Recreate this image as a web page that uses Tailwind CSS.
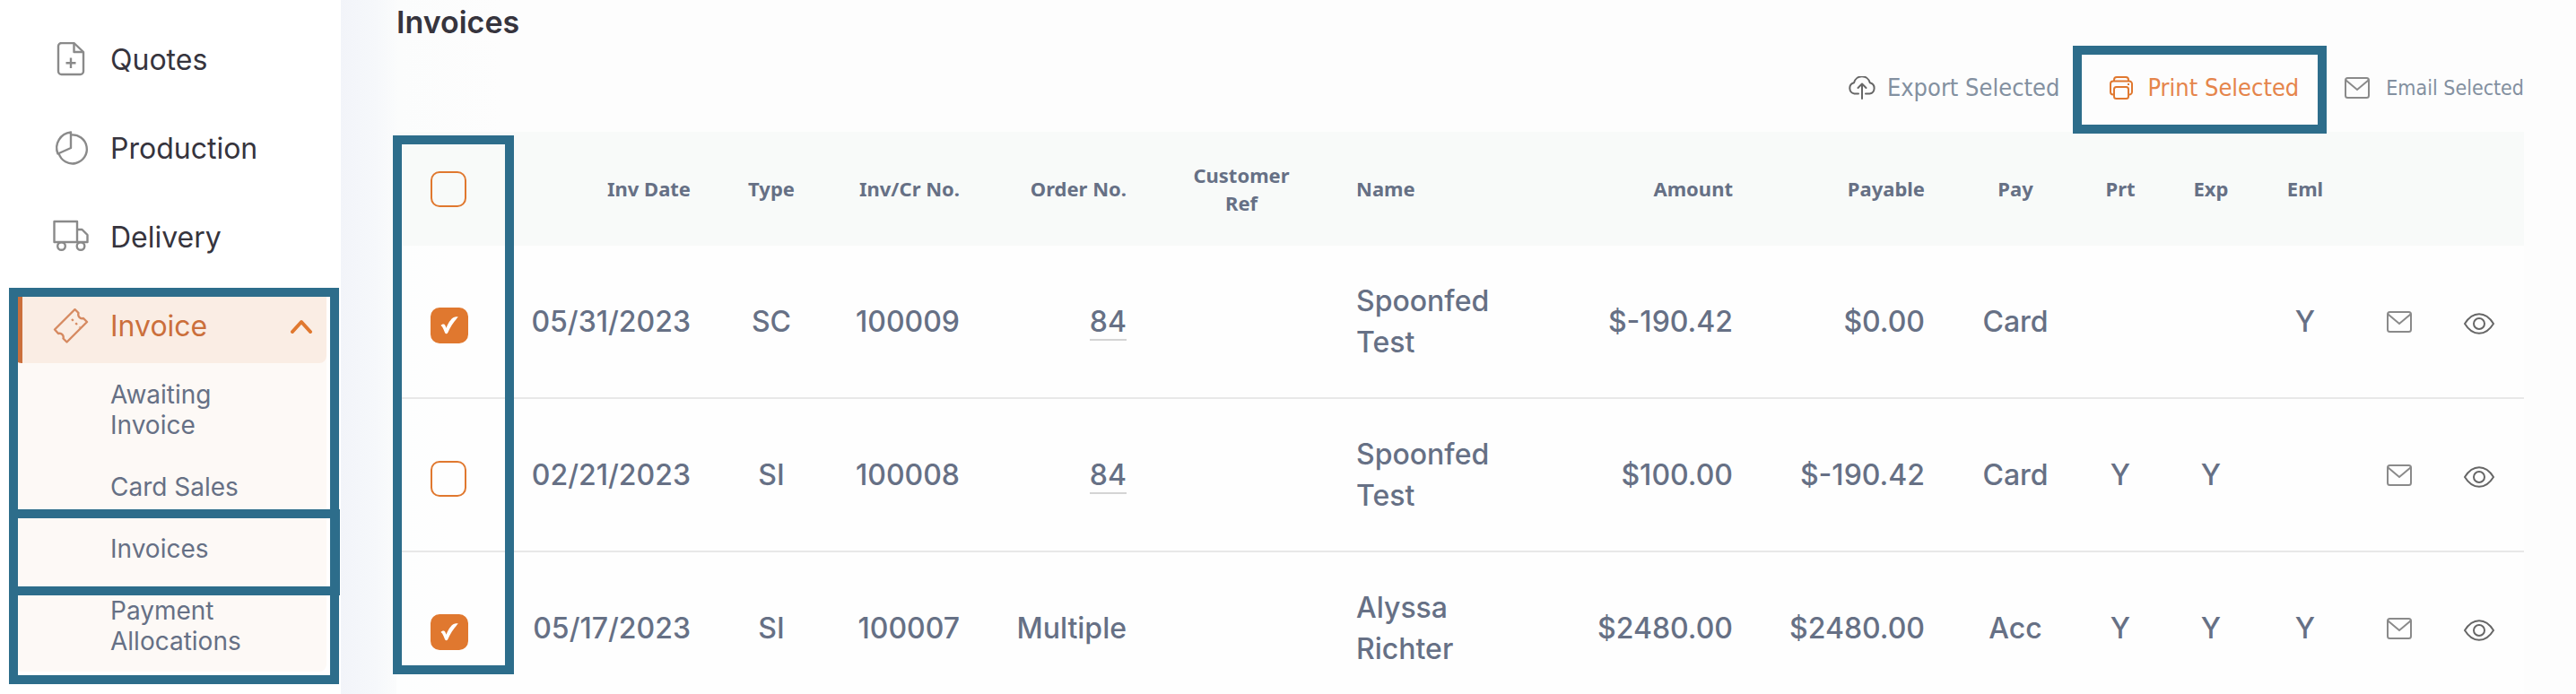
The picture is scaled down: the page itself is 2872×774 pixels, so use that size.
<!DOCTYPE html>
<html lang="en">
<head>
  <meta charset="UTF-8">
  <meta name="viewport" content="width=device-width, initial-scale=1.0">
  <title>Invoices</title>
  <script src="https://cdn.jsdelivr.net/npm/@tailwindcss/browser@4"></script>
</head>
<body class="bg-white font-['Inter',sans-serif] text-[#667085] h-screen overflow-hidden">
  <!-- Icon sprites -->
  <svg class="hidden" aria-hidden="true">
    <symbol id="icon-mail" viewBox="0 0 28 24">
      <rect x="1" y="1" width="26" height="22" rx="2.5" fill="none" stroke="currentColor" stroke-width="2" />
      <path d="M1.5 3.5 14 14 26.5 3.5" fill="none" stroke="currentColor" stroke-width="2" />
    </symbol>
    <symbol id="icon-eye" viewBox="0 0 34 24">
      <path d="M1 12C5 5.500 10.500 1.200 17 1.200S29 5.500 33 12C29 18.500 23.500 22.800 17 22.800S5 18.500 1 12Z" fill="none" stroke="currentColor" stroke-width="2" stroke-linejoin="round" />
      <circle cx="17" cy="12" r="6" fill="none" stroke="currentColor" stroke-width="2" />
    </symbol>
    <symbol id="icon-check" viewBox="0 0 20 20">
      <path d="M0.500 10C2 8 4.500 8 5.300 9.800L6.600 12.800C8.500 7.500 11.500 2.800 14.800 1 16.500.2 18.200.2 19.800.6 14.500 6 11 12 8.300 18 7.400 19.600 5.800 19.600 5 18 4 15.500 2.800 11.500.5 10Z" fill="currentColor" />
    </symbol>
  </svg>

  <div class="flex h-full">
    <!-- Sidebar -->
    <aside class="w-[380px] shrink-0 pl-4 pr-4 pt-[25px]">
      <nav class="flex flex-col gap-4 text-[32px] text-[#36343d]">
        <a href="#" class="flex h-[83px] items-center gap-6 pl-[43px]">
          <svg class="size-10 shrink-0 text-[#8a8a8a]" viewBox="0 0 40 40" fill="none" stroke="currentColor" stroke-width="2.400" stroke-linejoin="round">
            <path d="M23.500 1H9.500A3.500 3.500 0 0 0 6 4.500V32.500A3.500 3.500 0 0 0 9.500 36H30.500A3.500 3.500 0 0 0 34 32.500V11Z" />
            <path d="M23.500 1V11H34M20 17.500V29M14.500 23.200H25.500" />
          </svg>
          Quotes
        </a>
        <a href="#" class="flex h-[83px] items-center gap-6 pl-[43px]">
          <svg class="size-10 shrink-0 text-[#8a8a8a]" viewBox="0 0 40 40" fill="none" stroke="currentColor" stroke-width="2.400" stroke-linejoin="round">
            <path d="M20 1.500A17.500 17.500 0 0 0 5.500 25.500L20 19Z" />
            <path d="M20 4.500A16 16 0 1 1 6.500 25" />
          </svg>
          Production
        </a>
        <a href="#" class="flex h-[83px] items-center gap-6 pl-[43px]">
          <svg class="size-10 shrink-0 text-[#8a8a8a]" viewBox="0 0 40 40" fill="none" stroke="currentColor" stroke-width="2.400" stroke-linejoin="round">
            <path d="M1.500 2H27V25H1.500ZM27 11H32.500L38.500 17V25H27Z" />
            <circle cx="9.500" cy="29.500" r="4.300" />
            <circle cx="31" cy="29.500" r="4.300" />
          </svg>
          Delivery
        </a>

        <!-- Invoice group, open -->
        <div class="relative rounded-b-lg bg-[#fdf9f6]">
          <button type="button" class="flex h-[83px] w-full items-center gap-6 rounded-lg border-l-[9px] border-[#cb6f3b] bg-[#faede4] pl-[34px] pr-[14px] text-[#cb6f3b]">
            <svg class="size-10 shrink-0 text-[#d68a61]" viewBox="0 0 40 40" fill="none" stroke="currentColor" stroke-width="2.400" stroke-linejoin="round">
              <path d="M24.500 1 28.500 5C27.500 8.500 30 12 34 11L38 15 15.500 37.500 11.500 33.500C12.500 30 9.500 27 6 28L2 23.500Z" />
              <path d="M21 12 30 21" stroke-dasharray="2.500 3.500" />
            </svg>
            Invoice
            <svg class="ml-auto h-4 w-7 text-[#e0782f]" viewBox="0 0 28 16" fill="none" stroke="currentColor" stroke-width="4" stroke-linecap="round" stroke-linejoin="round">
              <path d="M4 14 14 3 24 14" />
            </svg>
          </button>
          <ul class="flex flex-col gap-[35px] pb-[17px] pl-[107px] pr-16 pt-[18px] text-[28px] leading-[34px] text-[#667085]">
            <li><a href="#" class="block">Awaiting Invoice</a></li>
            <li><a href="#" class="block">Card Sales</a></li>
            <li class="relative">
              <a href="#" class="block">Invoices</a>
              <span class="pointer-events-none absolute -left-[113px] -top-[27px] h-24 w-[369px] border-10 border-[#2d6d8b]"></span>
            </li>
            <li><a href="#" class="block">Payment Allocations</a></li>
          </ul>
          <span class="pointer-events-none absolute -left-1.5 -right-3.5 -top-px -bottom-3.5 border-10 border-[#2d6d8b]"></span>
        </div>
      </nav>
    </aside>

    <!-- Content -->
    <main class="min-w-0 flex-1 bg-[#fdfdfd] bg-[linear-gradient(to_right,#f2f4f9_0px,#f6f8fb_40px,#fbfcfc_65px,#fdfdfd_180px)] pl-[62px] pr-[58px]">
      <h1 class="text-[34px] font-semibold leading-[49px] text-[#36343d]">Invoices</h1>

      <div class="flex h-[98px] items-center justify-end font-['DejaVu_Sans_Condensed','DejaVu_Sans',sans-serif] text-[27px] text-[#8390a0]">
        <button type="button" class="mr-14 flex items-center gap-3">
          <svg class="h-[26px] w-8 text-[#666]" viewBox="0 0 32 26" fill="none" stroke="currentColor" stroke-width="2" stroke-linecap="round" stroke-linejoin="round">
            <path d="M12 19.500H7.500A6.300 6.300 0 0 1 7 7.200 9.200 9.200 0 0 1 24.800 7.200 6.300 6.300 0 0 1 24.500 19.500H20" />
            <path d="M16 25V9M11.500 13 16 8.500 20.500 13" />
          </svg>
          Export Selected
        </button>
        <button type="button" class="relative z-10 mr-[51px] flex items-center gap-4 text-[#e5854b]">
          <svg class="size-[26px] text-[#e0782f]" viewBox="0 0 26 26" fill="none" stroke="currentColor" stroke-width="2" stroke-linejoin="round">
            <path d="M5 5.500V4A3 3 0 0 1 8 1H18A3 3 0 0 1 21 4V5.500" />
            <path d="M5 20.500H4A3 3 0 0 1 1 17.500V8.500A3 3 0 0 1 4 5.500H22A3 3 0 0 1 25 8.500V17.500A3 3 0 0 1 22 20.500H21" />
            <rect x="5" y="12" width="16" height="13" rx="2.500" />
            <path d="M20 9H22" />
          </svg>
          Print Selected
          <span class="absolute -left-[41px] -right-[31px] top-1/2 mt-0.5 h-[98px] -translate-y-1/2 border-10 border-[#2d6d8b]"></span>
        </button>
        <button type="button" class="flex items-center gap-[18px] text-[23px]">
          <svg class="h-6 w-7 text-[#8a8a8a]"><use href="#icon-mail" /></svg>
          Email Selected
        </button>
      </div>

      <div class="relative">
        <table class="w-full table-fixed border-separate border-spacing-0 text-[32px] font-medium leading-[46px]">
          <colgroup>
            <col class="w-[131px]">
            <col class="w-[217px]">
            <col class="w-[140px]">
            <col class="w-[160px]">
            <col class="w-[186px]">
            <col class="w-[216px]">
            <col class="w-[230px]">
            <col class="w-[230px]">
            <col class="w-[214px]">
            <col class="w-[162px]">
            <col class="w-[72px]">
            <col class="w-[130px]">
            <col class="w-[80px]">
            <col class="w-[130px]">
            <col class="w-[74px]">
          </colgroup>
          <thead class="bg-[#f8faf9] font-['Noto_Sans',sans-serif] text-[22px] leading-[31px]">
            <tr class="h-[127px]">
              <th class="pl-[38px] text-left">
                <input type="checkbox" aria-label="Select all invoices" class="block size-10 appearance-none rounded-[10px] border-2 border-[#e0782f]">
              </th>
              <th class="pr-5 text-right">Inv Date</th>
              <th>Type</th>
              <th class="pr-5 text-right">Inv/Cr No.</th>
              <th class="pr-5 text-right">Order No.</th>
              <th class="px-12">Customer Ref</th>
              <th class="pl-5 text-left">Name</th>
              <th class="pr-5 text-right">Amount</th>
              <th class="pr-5 text-right">Payable</th>
              <th>Pay</th>
              <th>Prt</th>
              <th>Exp</th>
              <th>Eml</th>
              <td></td>
              <td></td>
            </tr>
          </thead>
          <tbody class="bg-white/60 text-center [&_td]:border-b-2 [&_td]:border-[#e8e8e8]">
            <tr class="h-[171px]">
              <td class="pl-[38px] pt-2">
                <label class="grid w-[42px] place-items-center">
                  <input type="checkbox" checked aria-label="Select invoice 100009" class="peer col-start-1 row-start-1 h-10 w-[42px] appearance-none rounded-[10px] border-2 border-[#e0782f] checked:bg-[#e0782f]">
                  <svg class="invisible col-start-1 row-start-1 size-5 text-white peer-checked:visible"><use href="#icon-check" /></svg>
                </label>
              </td>
              <td class="pr-5 text-right">05/31/2023</td>
              <td>SC</td>
              <td class="pr-5 text-right">100009</td>
              <td class="pr-5 text-right"><a href="#" class="border-b-2 border-[#d4d4d4]">84</a></td>
              <td></td>
              <td class="px-5 text-left">Spoonfed Test</td>
              <td class="pr-5 text-right">$-190.42</td>
              <td class="pr-5 text-right">$0.00</td>
              <td>Card</td>
              <td></td>
              <td></td>
              <td>Y</td>
              <td><button type="button" aria-label="Email invoice" class="block mx-auto"><svg class="h-6 w-7 text-[#8a8a8a]"><use href="#icon-mail" /></svg></button></td>
              <td class="pr-[26px] pt-1"><button type="button" aria-label="View invoice" class="block mx-auto"><svg class="h-6 w-[34px] text-[#666]"><use href="#icon-eye" /></svg></button></td>
            </tr>
            <tr class="h-[171px]">
              <td class="pl-[38px] pt-2">
                <label class="grid w-10 place-items-center">
                  <input type="checkbox" aria-label="Select invoice 100008" class="peer col-start-1 row-start-1 size-10 appearance-none rounded-[10px] border-2 border-[#e0782f] checked:bg-[#e0782f]">
                  <svg class="invisible col-start-1 row-start-1 size-5 text-white peer-checked:visible"><use href="#icon-check" /></svg>
                </label>
              </td>
              <td class="pr-5 text-right">02/21/2023</td>
              <td>SI</td>
              <td class="pr-5 text-right">100008</td>
              <td class="pr-5 text-right"><a href="#" class="border-b-2 border-[#d4d4d4]">84</a></td>
              <td></td>
              <td class="px-5 text-left">Spoonfed Test</td>
              <td class="pr-5 text-right">$100.00</td>
              <td class="pr-5 text-right">$-190.42</td>
              <td>Card</td>
              <td>Y</td>
              <td>Y</td>
              <td></td>
              <td><button type="button" aria-label="Email invoice" class="block mx-auto"><svg class="h-6 w-7 text-[#8a8a8a]"><use href="#icon-mail" /></svg></button></td>
              <td class="pr-[26px] pt-1"><button type="button" aria-label="View invoice" class="block mx-auto"><svg class="h-6 w-[34px] text-[#666]"><use href="#icon-eye" /></svg></button></td>
            </tr>
            <tr class="h-[171px]">
              <td class="pl-[38px] pt-2">
                <label class="grid w-[42px] place-items-center">
                  <input type="checkbox" checked aria-label="Select invoice 100007" class="peer col-start-1 row-start-1 h-10 w-[42px] appearance-none rounded-[10px] border-2 border-[#e0782f] checked:bg-[#e0782f]">
                  <svg class="invisible col-start-1 row-start-1 size-5 text-white peer-checked:visible"><use href="#icon-check" /></svg>
                </label>
              </td>
              <td class="pr-5 text-right">05/17/2023</td>
              <td>SI</td>
              <td class="pr-5 text-right">100007</td>
              <td class="pr-5 text-right">Multiple</td>
              <td></td>
              <td class="px-5 text-left">Alyssa Richter</td>
              <td class="pr-5 text-right">$2480.00</td>
              <td class="pr-5 text-right">$2480.00</td>
              <td>Acc</td>
              <td>Y</td>
              <td>Y</td>
              <td>Y</td>
              <td><button type="button" aria-label="Email invoice" class="block mx-auto"><svg class="h-6 w-7 text-[#8a8a8a]"><use href="#icon-mail" /></svg></button></td>
              <td class="pr-[26px] pt-1"><button type="button" aria-label="View invoice" class="block mx-auto"><svg class="h-6 w-[34px] text-[#666]"><use href="#icon-eye" /></svg></button></td>
            </tr>
          </tbody>
        </table>
        <!-- Highlight round the checkbox column -->
        <span class="pointer-events-none absolute -left-1 top-1 h-[601px] w-[135px] border-10 border-[#2d6d8b]"></span>
      </div>
    </main>
  </div>
</body>
</html>
